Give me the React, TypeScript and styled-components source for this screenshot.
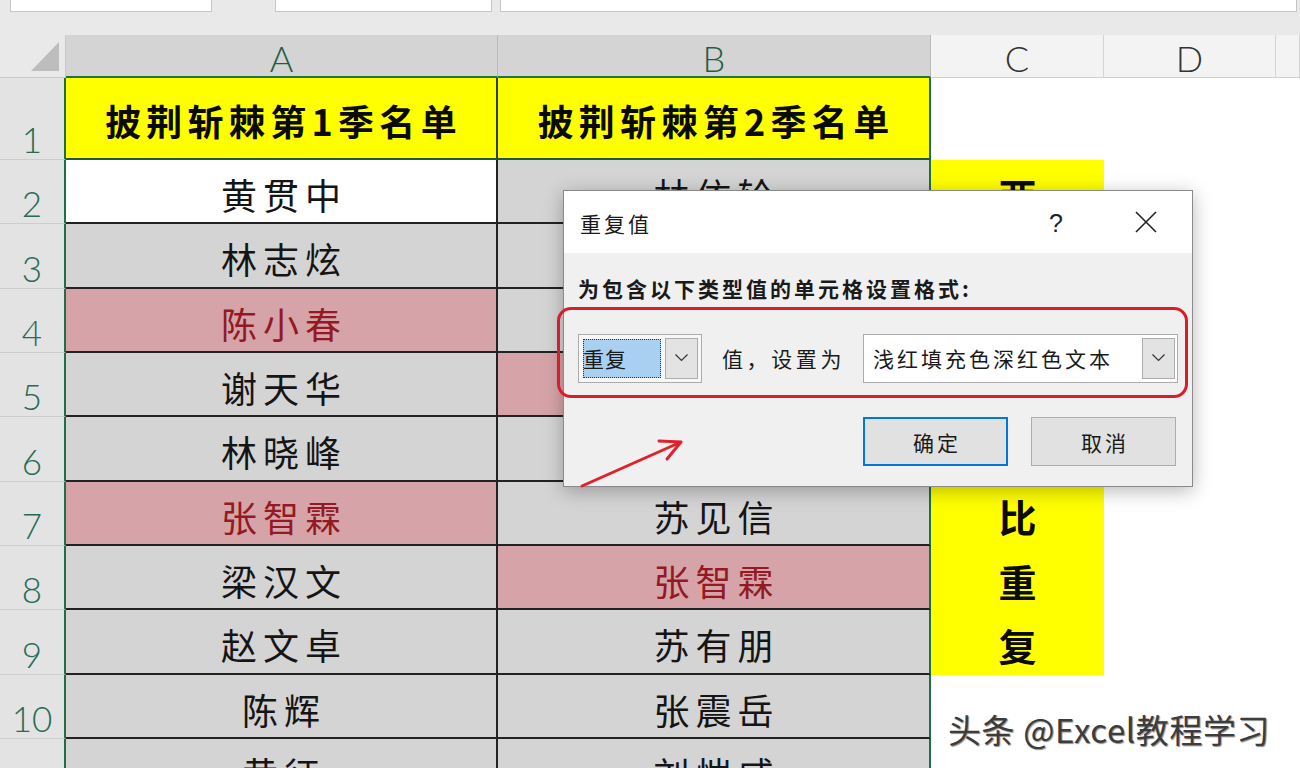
import styled, { createGlobalStyle } from 'styled-components';

const GlobalStyle = createGlobalStyle`
  html, body {
    margin: 0;
    padding: 0;
    background: #ffffff;
  }
  body {
    font-family: "Noto Sans CJK SC", "Noto Sans", sans-serif;
    overflow: hidden;
  }
`;

const Screen = styled.div`
  position: relative;
  width: 1300px;
  height: 768px;
  overflow: hidden;
  background: #ffffff;
`;

// name box / formula bar strip
const TopBar = styled.div`
  height: 35px;
  background: #e9e9e9;
  display: flex;
  align-items: flex-start;
  padding-left: 10px;
  box-sizing: border-box;
`;

const FieldBox = styled.div<{ $w: number; $gap: number }>`
  width: ${(p) => p.$w}px;
  margin-right: ${(p) => p.$gap}px;
  height: 12px;
  background: #ffffff;
  border: 1px solid #c6c6c6;
  border-top: none;
  box-sizing: border-box;
`;

const Sheet = styled.div`
  display: grid;
  grid-template-columns: 66px 432px 433px 173px 172px 1fr;
  grid-template-rows: 43px 82px repeat(10, 64.33px);
`;

const Corner = styled.div`
  background: #e9e9e9;
  border-right: 1px solid #c9c9c9;
  border-bottom: 1px solid #c9c9c9;
  box-sizing: border-box;
  display: flex;
  align-items: flex-end;
  justify-content: flex-end;
  padding: 0 6px 6px 0;
`;

const CornerMark = styled.div`
  width: 28px;
  height: 29px;
  background: #bdbdbd;
  clip-path: polygon(100% 0, 100% 100%, 0 100%);
`;

const ColHead = styled.div<{ $sel?: boolean }>`
  background: ${(p) => (p.$sel ? '#d4d4d4' : '#f3f3f3')};
  color: ${(p) => (p.$sel ? '#1f5e46' : '#333333')};
  border-right: 1px solid ${(p) => (p.$sel ? '#bababa' : '#d3d3d3')};
  border-bottom: ${(p) => (p.$sel ? '2px solid #217346' : '1px solid #d0d0d0')};
  box-sizing: border-box;
  display: flex;
  align-items: center;
  justify-content: center;
  font-family: Lato, "Liberation Sans", sans-serif;
  font-weight: 300;
  font-size: 36px;
  line-height: 1;
  padding-top: 4px;
`;

const RowHead = styled.div`
  background: #e3e3e3;
  border-right: 2px solid #1f6e46;
  border-bottom: 1px solid #cdcdcd;
  box-sizing: border-box;
  color: #2a6a55;
  display: flex;
  align-items: flex-end;
  justify-content: center;
  font-family: Lato, "Liberation Sans", sans-serif;
  font-weight: 300;
  font-size: 35px;
  line-height: 1;
  padding-bottom: 2px;
`;

const TitleCell = styled.div<{ $outer?: boolean }>`
  background: #ffff00;
  border-bottom: 2px solid #1f5a36;
  border-right: 2px solid ${(p) => (p.$outer ? '#1f6e46' : '#27432f')};
  box-sizing: border-box;
  display: flex;
  align-items: center;
  justify-content: center;
  padding: 4px 0 0 5px;
  font-weight: 700;
  font-size: 36px;
  letter-spacing: 5.3px;
  color: #0a0a0a;
`;

type Tone = 'white' | 'gray' | 'pink';

const toneBg: Record<Tone, string> = {
  white: '#ffffff',
  gray: '#d4d4d4',
  pink: '#d6a4a8',
};

const NameCell = styled.div<{ $tone: Tone; $outer?: boolean }>`
  background: ${(p) => toneBg[p.$tone]};
  color: ${(p) => (p.$tone === 'pink' ? '#921a24' : '#151515')};
  border-bottom: 2px solid #222222;
  border-right: 2px solid ${(p) => (p.$outer ? '#1f6e46' : '#222222')};
  box-sizing: border-box;
  display: flex;
  align-items: center;
  justify-content: center;
  padding: 6px 0 0 6px;
  font-size: 36px;
  letter-spacing: 6px;
  white-space: nowrap;
  overflow: hidden;
`;

const NoteCell = styled.div<{ $fill?: boolean }>`
  background: ${(p) => (p.$fill ? '#ffff00' : '#ffffff')};
  display: flex;
  align-items: center;
  justify-content: center;
  padding-top: 4px;
  font-weight: 700;
  font-size: 38px;
  color: #0a0a0a;
`;

const Blank = styled.div`
  background: #ffffff;
`;

// 重复值 dialog
const Dialog = styled.div`
  position: absolute;
  left: 563px;
  top: 190px;
  width: 630px;
  height: 297px;
  box-sizing: border-box;
  border: 1px solid #8a8a8a;
  background: #f0f0f0;
  box-shadow: 0 4px 18px rgba(0, 0, 0, 0.28);
  display: flex;
  flex-direction: column;
  color: #1a1a1a;
`;

const DialogHeader = styled.div`
  height: 62px;
  background: #ffffff;
  display: flex;
  align-items: center;
  padding-left: 16px;
`;

const DialogTitle = styled.div`
  flex: 1;
  font-size: 21px;
  letter-spacing: 3px;
  padding-top: 2px;
`;

const HelpMark = styled.div`
  font-family: "Liberation Sans", sans-serif;
  font-size: 25px;
  color: #222;
  margin-right: 72px;
  padding-top: 2px;
`;

const CloseBtn = styled.div`
  width: 22px;
  height: 22px;
  margin-right: 35px;
  display: flex;
`;

const DialogBody = styled.div`
  flex: 1;
  padding: 22px 14px 0 14px;
  display: flex;
  flex-direction: column;
`;

const Prompt = styled.div`
  font-size: 21px;
  font-weight: 700;
  letter-spacing: 3px;
  line-height: 26px;
`;

const ControlRow = styled.div`
  margin-top: 32px;
  height: 50px;
  display: flex;
  align-items: center;
`;

const Combo = styled.div<{ $w?: number; $white?: boolean }>`
  ${(p) => (p.$w ? `width: ${p.$w}px;` : 'flex: 1;')}
  height: 49px;
  box-sizing: border-box;
  border: 1px solid #acacac;
  background: ${(p) => (p.$white ? '#ffffff' : '#f7f7f7')};
  display: flex;
  align-items: center;
  padding: 0 2px 0 4px;
`;

const PickedText = styled.div`
  width: 78px;
  height: 39px;
  box-sizing: border-box;
  background: #a9cff1;
  outline: 1px dotted #333;
  outline-offset: -1px;
  display: flex;
  align-items: center;
  font-size: 21px;
  letter-spacing: 1px;
  margin-right: 4px;
`;

const ComboText = styled.div`
  flex: 1;
  font-size: 21px;
  letter-spacing: 3px;
  padding-left: 5px;
  white-space: nowrap;
`;

const DropBtn = styled.div`
  width: 33px;
  height: 41px;
  box-sizing: border-box;
  background: #e3e3e3;
  border: 1px solid #adadad;
  display: flex;
  align-items: center;
  justify-content: center;
`;

const RowLabel = styled.div`
  margin: 0 18px 0 20px;
  font-size: 21px;
  letter-spacing: 3.6px;
  white-space: nowrap;
`;

const ButtonRow = styled.div`
  margin-top: 34px;
  display: flex;
  justify-content: flex-end;
  gap: 23px;
  padding-right: 2px;
`;

const DlgButton = styled.div<{ $primary?: boolean }>`
  width: 145px;
  height: 49px;
  box-sizing: border-box;
  background: #e1e1e1;
  border: ${(p) => (p.$primary ? '2px solid #0078d7' : '1px solid #adadad')};
  display: flex;
  align-items: center;
  justify-content: center;
  font-size: 21px;
  letter-spacing: 3px;
  padding-left: 3px;
`;

// red highlight annotations
const RedFrame = styled.div`
  position: absolute;
  left: 557px;
  top: 307px;
  width: 631px;
  height: 91px;
  box-sizing: border-box;
  border: 3px solid #d71f2b;
  border-radius: 14px;
`;

const ArrowMark = styled.svg`
  position: absolute;
  left: 570px;
  top: 430px;
`;

const Watermark = styled.div`
  position: absolute;
  left: 948px;
  top: 705px;
  font-size: 33px;
  letter-spacing: 0.6px;
  color: #3c3c3c;
  white-space: nowrap;
  text-shadow: 1px 1px 1px rgba(0, 0, 0, 0.45), -1px -1px 0 rgba(255, 255, 255, 0.8);
`;

const Chevron = () => (
  <svg width="13" height="8" viewBox="0 0 13 8">
    <polyline points="0.5,0.5 6.5,6.5 12.5,0.5" fill="none" stroke="#333" strokeWidth="1.2" />
  </svg>
);

type Row = { a: string; aTone: Tone; b: string; bTone: Tone; c?: string };

// rows 3-6 of B and C sit under the dialog, so only their fills are drawn
const rows: Row[] = [
  { a: '黄贯中', aTone: 'white', b: '林依轮', bTone: 'gray', c: '两' },
  { a: '林志炫', aTone: 'gray', b: '', bTone: 'gray', c: ' ' },
  { a: '陈小春', aTone: 'pink', b: '', bTone: 'gray', c: ' ' },
  { a: '谢天华', aTone: 'gray', b: '', bTone: 'pink', c: ' ' },
  { a: '林晓峰', aTone: 'gray', b: '', bTone: 'gray', c: ' ' },
  { a: '张智霖', aTone: 'pink', b: '苏见信', bTone: 'gray', c: '比' },
  { a: '梁汉文', aTone: 'gray', b: '张智霖', bTone: 'pink', c: '重' },
  { a: '赵文卓', aTone: 'gray', b: '苏有朋', bTone: 'gray', c: '复' },
  { a: '陈辉', aTone: 'gray', b: '张震岳', bTone: 'gray' },
  { a: '黄征', aTone: 'gray', b: '刘恺威', bTone: 'gray' },
];

export default function App() {
  return (
    <Screen>
      <GlobalStyle />
      <TopBar>
        <FieldBox $w={202} $gap={63} />
        <FieldBox $w={217} $gap={8} />
        <FieldBox $w={797} $gap={0} />
      </TopBar>

      <Sheet>
        <Corner>
          <CornerMark />
        </Corner>
        <ColHead $sel>A</ColHead>
        <ColHead $sel>B</ColHead>
        <ColHead>C</ColHead>
        <ColHead>D</ColHead>
        <ColHead />

        <RowHead>1</RowHead>
        <TitleCell>披荆斩棘第1季名单</TitleCell>
        <TitleCell $outer>披荆斩棘第2季名单</TitleCell>
        <Blank />
        <Blank />
        <Blank />

        {rows.map((r, i) => (
          <>
            <RowHead key={`h${i}`}>{i + 2}</RowHead>
            <NameCell key={`a${i}`} $tone={r.aTone}>{r.a}</NameCell>
            <NameCell key={`b${i}`} $tone={r.bTone} $outer>{r.b}</NameCell>
            <NoteCell key={`c${i}`} $fill={!!r.c}>{r.c?.trim()}</NoteCell>
            <Blank key={`d${i}`} />
            <Blank key={`e${i}`} />
          </>
        ))}
      </Sheet>

      <Dialog>
        <DialogHeader>
          <DialogTitle>重复值</DialogTitle>
          <HelpMark>?</HelpMark>
          <CloseBtn>
            <svg width="22" height="22" viewBox="0 0 22 22">
              <path d="M1 1 L21 21 M21 1 L1 21" stroke="#222" strokeWidth="1.6" fill="none" />
            </svg>
          </CloseBtn>
        </DialogHeader>
        <DialogBody>
          <Prompt>为包含以下类型值的单元格设置格式:</Prompt>
          <ControlRow>
            <Combo $w={124}>
              <PickedText>重复</PickedText>
              <DropBtn>
                <Chevron />
              </DropBtn>
            </Combo>
            <RowLabel>值，设置为</RowLabel>
            <Combo $white>
              <ComboText>浅红填充色深红色文本</ComboText>
              <DropBtn>
                <Chevron />
              </DropBtn>
            </Combo>
          </ControlRow>
          <ButtonRow>
            <DlgButton $primary>确定</DlgButton>
            <DlgButton>取消</DlgButton>
          </ButtonRow>
        </DialogBody>
      </Dialog>

      <RedFrame />
      <ArrowMark width="130" height="70" viewBox="0 0 130 70">
        <path
          d="M12 56 L111 12 M89 11 L111 12 L97 29"
          stroke="#e0202a"
          strokeWidth="3"
          strokeLinecap="round"
          strokeLinejoin="round"
          fill="none"
        />
      </ArrowMark>

      <Watermark>头条 @Excel教程学习</Watermark>
    </Screen>
  );
}
